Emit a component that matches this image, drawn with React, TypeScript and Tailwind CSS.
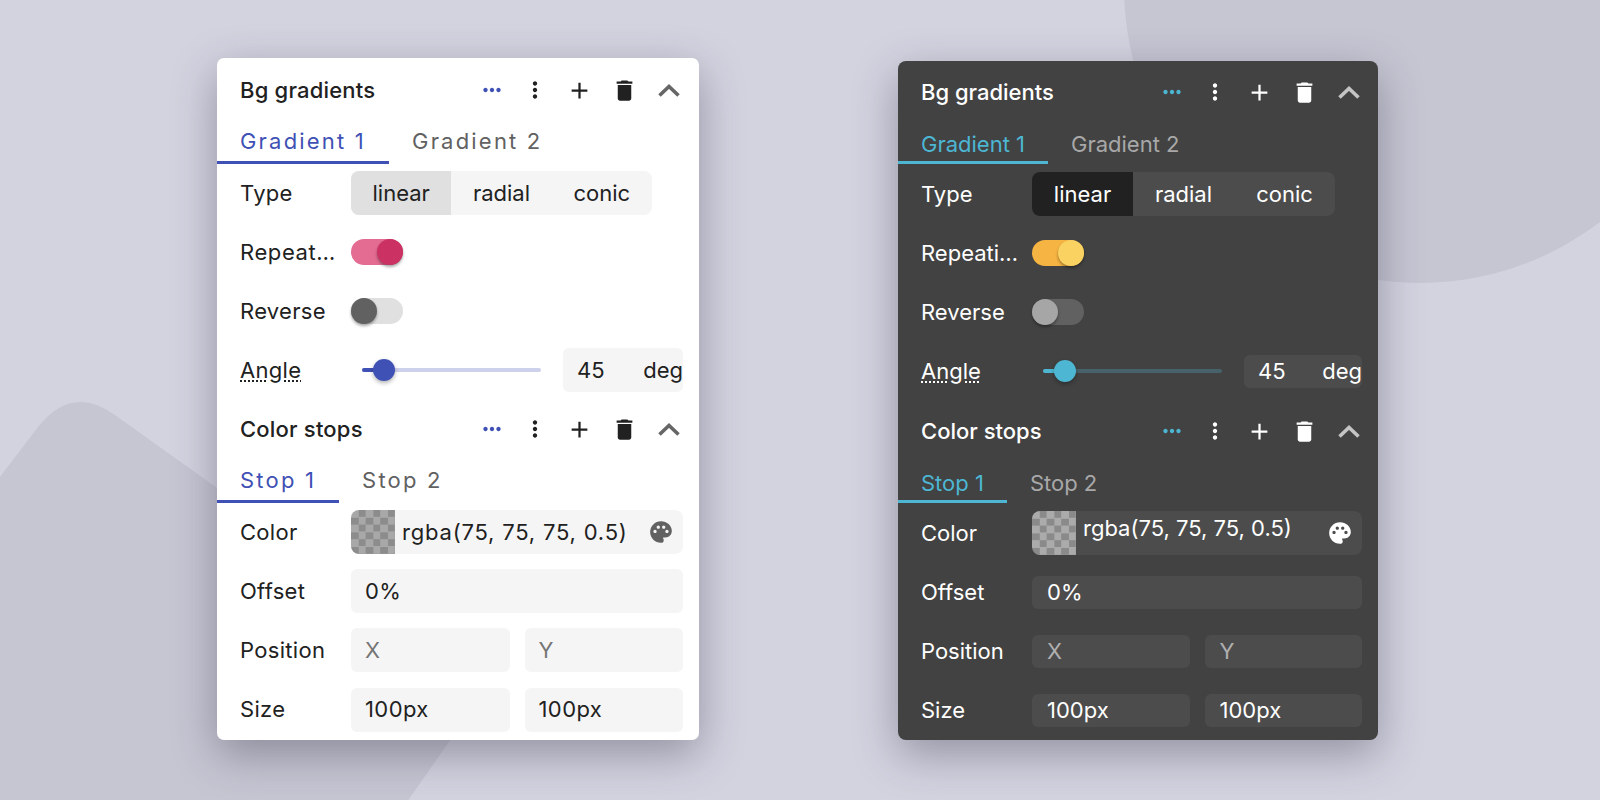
import { MdAdd, MdDelete, MdMoreHoriz, MdMoreVert, MdPalette } from 'react-icons/md';

type Theme = {
  panel: string;
  icon: string;
  chevron: string;
  accentText: string;
  accentBar: string;
  tabIdle: string;
  tabTrack: string;
  tabText: string;
  labelTrack: string;
  titleTrack: string;
  rgbaText: string;
  field: string;
  fieldActive: string;
  fieldPad: string;
  muted: string;
  headerH: string;
  headerPad: string;
  tabsH: string;
  afterTabs: string;
  afterRows: string;
  stopGap: string;
  inputH: string;
  trackOn: string;
  thumbOn: string;
  trackOff: string;
  thumbOff: string;
  sliderTrack: string;
  swatch: string;
  segW: string;
  repeatW: string;
  paletteColor: string;
  panelPos: string;
};

const light: Theme = {
  panel: 'bg-white text-[#212121] w-[482px] mt-[58px] pb-[8px] rounded-[7px]',
  icon: 'text-[#212121]',
  chevron: 'text-[#666666]',
  accentText: 'text-[#3f51b5]',
  accentBar: 'bg-[#3f51b5]',
  tabIdle: 'text-[#616161]',
  tabTrack: 'tracking-[2.2px]',
  tabText: '',
  labelTrack: 'tracking-[0.3px]',
  titleTrack: 'tracking-[0.2px]',
  rgbaText: 'tracking-[0.8px]',
  field: 'bg-[#f5f5f5]',
  fieldActive: 'bg-[#e0e0e0]',
  fieldPad: 'px-[14px] tracking-[0.4px]',
  muted: 'text-[#757575]',
  headerH: 'h-[64px]',
  headerPad: 'pr-[8px]',
  tabsH: 'h-[42px]',
  afterTabs: 'mt-[7px]',
  afterRows: 'mt-[5px]',
  stopGap: 'gap-[15.2px]',
  inputH: 'h-[44px]',
  trackOn: 'bg-[#e46c92]',
  thumbOn: 'bg-[#cb3263]',
  trackOff: 'bg-[#e0e0e0]',
  thumbOff: 'bg-[#616161]',
  sliderTrack: 'bg-[#cdd1ec]',
  swatch: 'bg-[conic-gradient(#8c8c8c_25%,#a8a8a8_0_50%,#8c8c8c_0_75%,#a8a8a8_0)] bg-[length:14.6px_14.6px]',
  segW: 'w-[301px]',
  repeatW: 'w-[97px] tracking-[0.6px]',
  paletteColor: 'text-[#616161]',
  panelPos: 'ml-[217px]',
};

const dark: Theme = {
  panel: 'bg-[#424242] text-white w-[480px] mt-[61px] pb-[8px] rounded-[8px]',
  icon: 'text-white',
  chevron: 'text-[#c4c4c4]',
  accentText: 'text-[#4db6d3]',
  accentBar: 'bg-[#4db6d3]',
  tabIdle: 'text-[#a8a8a8]',
  tabTrack: '',
  tabText: 'pt-[5px]',
  labelTrack: '',
  titleTrack: '',
  rgbaText: 'pb-[10px]',
  field: 'bg-[#4c4c4c]',
  fieldActive: 'bg-[#212121]',
  fieldPad: 'px-[15px]',
  muted: 'text-[#b0b0b0]',
  headerH: 'h-[62px]',
  headerPad: 'pr-[7px]',
  tabsH: 'h-[41px]',
  afterTabs: 'mt-[8px]',
  afterRows: 'mt-[7px]',
  stopGap: 'gap-[15px]',
  inputH: 'h-[33px]',
  trackOn: 'bg-[#f6b442]',
  thumbOn: 'bg-[#f9d262]',
  trackOff: 'bg-[#616161]',
  thumbOff: 'bg-[#a6a6a6]',
  sliderTrack: 'bg-[#48626b]',
  swatch: 'bg-[conic-gradient(#8a8a8a_25%,#ababab_0_50%,#8a8a8a_0_75%,#ababab_0)] bg-[length:14.6px_14.6px]',
  segW: 'w-[303px]',
  repeatW: 'w-[100px]',
  paletteColor: 'text-white',
  panelPos: 'ml-[199px]',
};

const Chevron = () => (
  <svg width="26" height="26" viewBox="0 0 26 26" fill="none" stroke="currentColor" strokeWidth="3.6">
    <path d="M3.5 18.5 L13 9.5 L22.5 18.5" />
  </svg>
);

const SectionHeader = ({ t, title }: { t: Theme; title: string }) => (
  <div className={`flex items-center pl-[23px] ${t.headerH}`}>
    <span className={`flex-1 text-[22px] font-medium ${t.titleTrack}`}>{title}</span>
    <div className={`flex items-center ${t.headerPad}`}>
      <span className={`mr-[-1px] flex w-[44.5px] justify-center ${t.accentText}`}><MdMoreHoriz size={26} /></span>
      <span className={`flex w-[44.5px] justify-center ${t.icon}`}><MdMoreVert size={26} /></span>
      <span className={`flex w-[44.5px] justify-center ${t.icon}`}><MdAdd size={27} /></span>
      <span className={`flex w-[44.5px] justify-center ${t.icon}`}><MdDelete size={27} /></span>
      <span className={`flex w-[44.5px] justify-center ${t.chevron}`}><Chevron /></span>
    </div>
  </div>
);

const Tabs = ({ t, names }: { t: Theme; names: string[] }) => (
  <div className={`flex ${t.tabsH} ${t.tabTrack} text-[22px]`}>
    {names.map((name, i) => (
      <div key={name} className="flex flex-col">
        <span className={`flex flex-1 items-center px-[23px] ${t.tabText} ${i === 0 ? t.accentText : t.tabIdle}`}>{name}</span>
        <span className={`mb-[0.5px] h-[3px] ${i === 0 ? t.accentBar : ''}`}></span>
      </div>
    ))}
  </div>
);

const Row = ({ t, label, children }: { t: Theme; label: React.ReactNode; children: React.ReactNode }) => (
  <div className="flex h-[44px] items-center pl-[23px] pr-[16px]">
    <div className={`w-[111px] shrink-0 text-[22px] ${t.labelTrack}`}>{label}</div>
    <div className="flex min-w-0 flex-1 items-center">{children}</div>
  </div>
);

const Toggle = ({ t, on }: { t: Theme; on: boolean }) => (
  <div className={`flex h-[26px] w-[52px] rounded-full ${on ? `justify-end ${t.trackOn}` : t.trackOff}`}>
    <div className={`h-[26px] w-[26px] rounded-full shadow-[0_2px_3px_rgba(0,0,0,0.35)] ${on ? t.thumbOn : t.thumbOff}`}></div>
  </div>
);

const Field = ({ t, value, hint }: { t: Theme; value: string; hint?: boolean }) => (
  <div className={`flex flex-1 items-center rounded-[6px] text-[22px] ${t.fieldPad} ${t.inputH} ${t.field} ${hint ? t.muted : ''}`}>
    {value}
  </div>
);

const Panel = ({ t }: { t: Theme }) => (
  <div className={`shrink-0 self-start font-['Inter',sans-serif] shadow-[0_14px_44px_rgba(40,40,60,0.38)] ${t.panel} ${t.panelPos}`}>
    <SectionHeader t={t} title="Bg gradients" />
    <Tabs t={t} names={['Gradient 1', 'Gradient 2']} />

    <div className={`flex flex-col gap-[15px] ${t.afterTabs}`}>
      <Row t={t} label="Type">
        <div className={`grid h-[44px] grid-cols-3 overflow-hidden rounded-[8px] text-[22px] ${t.segW} ${t.field}`}>
          <span className={`flex items-center justify-center ${t.fieldActive}`}>linear</span>
          <span className="flex items-center justify-center">radial</span>
          <span className="flex items-center justify-center">conic</span>
        </div>
      </Row>
      <Row t={t} label={<div className={`truncate ${t.repeatW}`}>Repeating</div>}>
        <Toggle t={t} on />
      </Row>
      <Row t={t} label="Reverse">
        <Toggle t={t} on={false} />
      </Row>
      <Row t={t} label={<span className="underline decoration-dotted underline-offset-[3px]">Angle</span>}>
        <div className={`relative ml-[11px] h-[4px] w-[179px] shrink-0 rounded-full ${t.sliderTrack}`}>
          <div className={`h-[4px] w-[22px] rounded-full ${t.accentBar}`}></div>
          <div className={`absolute left-[11px] top-[-9px] h-[22px] w-[22px] rounded-full shadow-[0_2px_4px_rgba(0,0,0,0.3)] ${t.accentBar}`}></div>
        </div>
        <div className={`ml-[22px] flex flex-1 items-center justify-between overflow-hidden whitespace-nowrap rounded-[6px] pl-[14px] text-[22px] ${t.inputH} ${t.field}`}>
          <span>45</span>
          <span>deg</span>
        </div>
      </Row>
    </div>

    <div className={t.afterRows}>
      <SectionHeader t={t} title="Color stops" />
    </div>
    <Tabs t={t} names={['Stop 1', 'Stop 2']} />

    <div className={`flex flex-col ${t.stopGap} ${t.afterTabs}`}>
      <Row t={t} label="Color">
        <div className={`flex h-[44px] flex-1 items-center overflow-hidden rounded-[8px] text-[22px] ${t.field}`}>
          <div className={`h-[44px] w-[44px] shrink-0 ${t.swatch}`}></div>
          <span className={`ml-[7px] flex-1 ${t.rgbaText}`}>rgba(75, 75, 75, 0.5)</span>
          <span className={`mr-[9px] ${t.paletteColor}`}><MdPalette size={26} /></span>
        </div>
      </Row>
      <Row t={t} label="Offset">
        <Field t={t} value="0%" />
      </Row>
      <Row t={t} label="Position">
        <div className="flex flex-1 gap-[15px]">
          <Field t={t} value="X" hint />
          <Field t={t} value="Y" hint />
        </div>
      </Row>
      <Row t={t} label="Size">
        <div className="flex flex-1 gap-[15px]">
          <Field t={t} value="100px" />
          <Field t={t} value="100px" />
        </div>
      </Row>
    </div>
  </div>
);

const App = () => {
  return (
    <div className="relative flex h-[800px] w-[1600px] overflow-hidden bg-[#d3d3e0]">
      {/* background shapes */}
      <svg className="absolute inset-0" width="1600" height="800" viewBox="0 0 1600 800">
        <circle cx="1420" cy="-13" r="296" fill="#c6c6d3" />
        <path d="M-60 555 L38 427 Q72 384 115 415 L490 683 L400 812 L-60 812 Z" fill="#c6c6d3" />
      </svg>
      <div className="relative flex">
        <Panel t={light} />
        <Panel t={dark} />
      </div>
    </div>
  );
};

export default App;
